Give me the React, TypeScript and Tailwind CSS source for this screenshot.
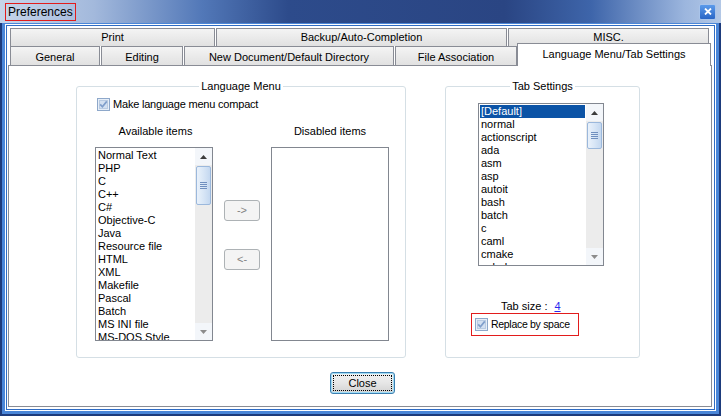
import React from "react";

const availableItems = [
  "Normal Text",
  "PHP",
  "C",
  "C++",
  "C#",
  "Objective-C",
  "Java",
  "Resource file",
  "HTML",
  "XML",
  "Makefile",
  "Pascal",
  "Batch",
  "MS INI file",
  "MS-DOS Style",
];

const tabLangs = [
  "[Default]",
  "normal",
  "actionscript",
  "ada",
  "asm",
  "asp",
  "autoit",
  "bash",
  "batch",
  "c",
  "caml",
  "cmake",
  "cobol",
];

function CheckBox() {
  return (
    <svg width="13" height="13" viewBox="0 0 13 13" className="shrink-0">
      <rect x="0.5" y="0.5" width="12" height="12" fill="#e6eef8" stroke="#8ea8ca" />
      <rect x="2.5" y="2.5" width="8" height="8" fill="#d3e0f1" stroke="#b9cbe2" />
      <path d="M3.2 6.4 L5.4 8.8 L9.8 3.4" stroke="#7f9ecb" strokeWidth="1.7" fill="none" />
    </svg>
  );
}

function ScrollBar({ thumbClass }: { thumbClass: string }) {
  return (
    <div className="w-[17px] h-full flex flex-col bg-[#ececec]">
      <div className="h-[17px] flex items-center justify-center bg-[#f3f6fa]">
        <svg width="7" height="4" viewBox="0 0 7 4">
          <path d="M0 4 L3.5 0 L7 4Z" fill="#3c3c3c" />
        </svg>
      </div>
      <div
        className={`mx-px rounded-[2px] border border-[#9bb8dc] bg-gradient-to-r from-[#eaf2fb] via-[#d8e6f6] to-[#c4d8f0] flex flex-col items-center justify-center gap-px ${thumbClass}`}
      >
        <div className="w-[7px] h-px bg-[#6f8fbf]" />
        <div className="w-[7px] h-px bg-[#6f8fbf]" />
        <div className="w-[7px] h-px bg-[#6f8fbf]" />
        <div className="w-[7px] h-px bg-[#6f8fbf]" />
      </div>
      <div className="mt-auto h-[17px] flex items-center justify-center bg-[#f3f6fa]">
        <svg width="7" height="4" viewBox="0 0 7 4">
          <path d="M0 0 L3.5 4 L7 0Z" fill="#8c8c8c" />
        </svg>
      </div>
    </div>
  );
}

function ListBox({
  items,
  selected,
  className,
  thumbClass,
}: {
  items: string[];
  selected?: number;
  className: string;
  thumbClass: string;
}) {
  return (
    <div className={`flex border border-[#828790] bg-white overflow-hidden ${className}`}>
      <div className="flex-1 min-w-0 pt-px pl-px pr-px overflow-hidden">
        {items.map((item, i) => (
          <div
            key={item}
            className={`h-[13px] leading-[13px] pl-px whitespace-nowrap ${
              i === selected ? "bg-[#0b53a6] text-white" : "text-black"
            }`}
          >
            {item}
          </div>
        ))}
      </div>
      <ScrollBar thumbClass={thumbClass} />
    </div>
  );
}

function Tab({ label, className }: { label: string; className: string }) {
  return (
    <div
      className={`flex items-center justify-center border border-[#898c95] bg-gradient-to-b from-[#f4f4f4] to-[#e1e1e1] text-black ${className}`}
    >
      {label}
    </div>
  );
}

function MoveButton({ label, className }: { label: string; className: string }) {
  return (
    <div
      className={`w-[36px] h-[21px] flex items-center justify-center rounded-[3px] border border-[#adb2b5] bg-[#f4f4f4] text-[#838383] ${className}`}
    >
      {label}
    </div>
  );
}

export default function App() {
  return (
    <div className="w-[721px] h-[416px] flex flex-col overflow-hidden bg-white font-['Liberation_Sans',Arial,sans-serif] text-[11px] leading-[13px] text-black">
      {/* title bar */}
      <div className="h-[23px] shrink-0 flex items-center bg-[linear-gradient(90deg,#c6d5ea_0%,#a3b9dc_13%,#5278b8_28%,#2d4b8b_40%,#2a4583_70%,#3e65aa_82%,#9cb6de_95%,#b3c8e6_100%)]">
        <div className="ml-[5px] h-[18px] flex items-center border border-[#e21c1c] px-[2px] text-[12px] leading-[14px] text-black">
          Preferences
        </div>
        <div className="ml-auto mr-[5px] w-[17px] h-[16px] flex items-center justify-center rounded-[2px] border border-[#a9c4ea] bg-gradient-to-b from-[#5b9aea] to-[#2a66c6]">
          <svg width="8" height="7" viewBox="0 0 8 7">
            <path d="M1 0.5 L7 6.5 M7 0.5 L1 6.5" stroke="#ffffff" strokeWidth="1.8" />
          </svg>
        </div>
      </div>

      {/* window frame */}
      <div className="flex-1 flex flex-col border-x-2 border-b-2 border-[#1d3b7c]">
        <div className="flex-1 flex flex-col border-x-[3px] border-t border-b-[3px] border-[#4a86d8]">
          <div className="flex-1 flex flex-col p-px bg-white">
            <div className="flex-1 flex flex-col border border-[#2f6cc4] bg-white">
              {/* tab rows */}
              <div className="pt-[2px] pl-[3px] flex flex-col">
                <div className="flex gap-px h-[18px]">
                  <Tab label="Print" className="w-[205px] border-b-0" />
                  <Tab label="Backup/Auto-Completion" className="w-[291px] border-b-0" />
                  <Tab label="MISC." className="w-[201px] border-b-0" />
                </div>
                <div className="flex items-end h-[22px] -mt-[3px]">
                  <Tab label="General" className="w-[90px] h-[19px] border-b-0 pt-[2px]" />
                  <Tab label="Editing" className="ml-px w-[82px] h-[19px] border-b-0 pt-[2px]" />
                  <Tab label="New Document/Default Directory" className="ml-px w-[210px] h-[19px] border-b-0 pt-[2px]" />
                  <Tab label="File Association" className="ml-px w-[122px] h-[19px] border-b-0 pt-[2px]" />
                  <div className="relative z-10 -mb-px w-[194px] h-[23px] flex items-center justify-center border border-b-0 border-[#898c95] bg-white pb-[2px]">
                    Language Menu/Tab Settings
                  </div>
                </div>
              </div>

              {/* panel */}
              <div className="ml-px mb-[2px] w-[704px] h-[342px] border border-[#898c95] bg-white pt-[14px] pl-[67px] flex flex-col">
                <div className="flex gap-[39px]">
                  {/* Language Menu group */}
                  <fieldset className="w-[330px] h-[278px] border border-[#d5dfe5] rounded-[3px] p-0 m-0">
                    <legend className="mx-auto px-[2px] leading-[13px]">Language Menu</legend>
                    <div className="mt-[5px] pl-[20px] h-[13px] flex items-center gap-[3px]">
                      <CheckBox />
                      <span className="whitespace-nowrap tracking-[-0.2px]">Make language menu compact</span>
                    </div>
                    <div className="mt-[14px] pl-[18px] flex">
                      <div className="w-[118px] flex flex-col">
                        <div className="h-[13px] text-center pl-[3px]">Available items</div>
                        <ListBox
                          items={availableItems}
                          className="mt-[9px] h-[194px]"
                          thumbClass="mt-[1px] h-[39px]"
                        />
                      </div>
                      <div className="mx-[11px] w-[36px] flex flex-col">
                        <MoveButton label="->" className="mt-[75px]" />
                        <MoveButton label="<-" className="mt-[28px]" />
                      </div>
                      <div className="w-[118px] flex flex-col">
                        <div className="h-[13px] text-center">Disabled items</div>
                        <div className="mt-[9px] h-[194px] border border-[#828790] bg-white" />
                      </div>
                    </div>
                  </fieldset>

                  {/* Tab Settings group */}
                  <fieldset className="w-[195px] h-[278px] border border-[#d5dfe5] rounded-[3px] p-0 m-0">
                    <legend className="mx-auto px-[2px] leading-[13px]">Tab Settings</legend>
                    <ListBox
                      items={tabLangs}
                      selected={0}
                      className="ml-[32px] mt-[10px] w-[126px] h-[163px]"
                      thumbClass="mt-[1px] h-[27px]"
                    />
                    <div className="mt-[34px] pl-[55px] h-[13px] flex items-center">
                      <span className="whitespace-nowrap">Tab size :</span>
                      <span className="ml-[7px] text-[#2a2aee] underline">4</span>
                    </div>
                    <div className="ml-[25px] w-[108px] h-[23px] flex items-center gap-[3px] border border-[#e21c1c] pl-[3px]">
                      <CheckBox />
                      <span className="whitespace-nowrap text-[10.5px] tracking-[-0.3px]">Replace by space</span>
                    </div>
                  </fieldset>
                </div>

                <div className="mt-[14px] ml-[254px]">
                  <div className="w-[65px] h-[22px] flex items-center justify-center rounded-[3px] border border-[#3c7fb1] bg-gradient-to-b from-[#f2f2f2] via-[#e6e6e6] to-[#d2d2d2] shadow-[inset_0_0_0_1px_#9fdcf6] outline outline-1 outline-dotted outline-black -outline-offset-4">
                    Close
                  </div>
                </div>
              </div>
            </div>
          </div>
        </div>
      </div>
    </div>
  );
}
